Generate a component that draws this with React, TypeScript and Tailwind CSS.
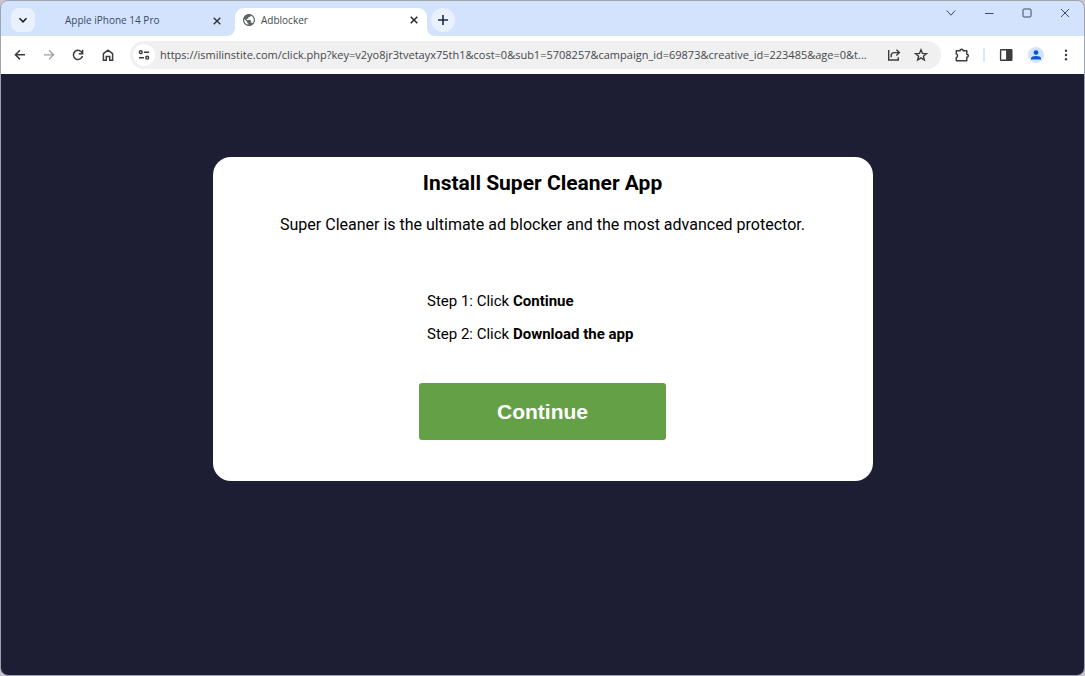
import type { ReactNode } from "react";

function IconButton({ label, className, children }: { label: string; className: string; children: ReactNode }) {
  return (
    <button type="button" aria-label={label} className={`flex shrink-0 items-center justify-center ${className}`}>
      {children}
    </button>
  );
}

function Icon({ size = 16, stroke = 2, children }: { size?: number; stroke?: number; children: ReactNode }) {
  return (
    <svg width={size} height={size} viewBox={`0 0 ${size} ${size}`} fill="none" stroke="currentColor" strokeWidth={stroke} aria-hidden="true">
      {children}
    </svg>
  );
}

function CloseIcon() {
  return (
    <Icon size={10} stroke={1.4}>
      <path d="M1.7 1.7 8.3 8.3M8.3 1.7 1.7 8.3" />
    </Icon>
  );
}

function GlobeIcon() {
  return (
    <svg width="12" height="12" viewBox="2 2 20 20" fill="#5f6368" aria-hidden="true">
      <path d="M12 2C6.48 2 2 6.48 2 12s4.48 10 10 10 10-4.48 10-10S17.52 2 12 2zm-1 17.93c-3.95-.49-7-3.85-7-7.93 0-.62.08-1.21.21-1.79L9 15v1c0 1.1.9 2 2 2v1.93zm6.9-2.54c-.26-.81-1-1.39-1.9-1.39h-1v-3c0-.55-.45-1-1-1H8v-2h2c.55 0 1-.45 1-1V7h2c1.1 0 2-.9 2-2v-.41c2.93 1.19 5 4.06 5 7.41 0 2.08-.8 3.97-2.1 5.39z" />
    </svg>
  );
}

function TabStrip() {
  return (
    <div className="flex h-[35px] shrink-0 bg-[#d3e3fd] pl-2 text-[#3c4a60]">
      <IconButton label="Search tabs" className="mt-[7px] ml-0.5 size-6 rounded-lg bg-[#e9f1fe] text-[#1f1f1f]">
        <Icon size={10} stroke={1.6}>
          <path d="M1.5 3.3 5 6.8 8.500 3.3" />
        </Icon>
      </IconButton>
      <div className="flex w-[200px] shrink-0 items-center pt-1 pr-[10px] pl-[30px]">
        <span className="grow text-[10px]">Apple iPhone 14 Pro</span>
        <IconButton label="Close Apple iPhone 14 Pro" className="size-4 text-[#333]">
          <CloseIcon />
        </IconButton>
      </div>
      <div className="relative mt-[7px] flex w-[192px] shrink-0 items-center rounded-t-[9px] bg-white pr-[5px] pb-[4px] pl-2">
        <svg className="absolute bottom-0 -left-2" width="8" height="8" viewBox="0 0 8 8" fill="white" aria-hidden="true">
          <path d="M8 0v8H0a8 8 0 0 0 8-8z" />
        </svg>
        <svg className="absolute -right-2 bottom-0" width="8" height="8" viewBox="0 0 8 8" fill="white" aria-hidden="true">
          <path d="M0 0v8h8a8 8 0 0 1-8-8z" />
        </svg>
        <GlobeIcon />
        <span className="ml-1.5 grow text-[10px] text-[#45484d]">Adblocker</span>
        <IconButton label="Close Adblocker" className="size-4 text-[#1f1f1f]">
          <CloseIcon />
        </IconButton>
      </div>
      <IconButton label="New tab" className="mt-[7px] ml-1 size-6 rounded-full bg-[#e9f1fe] text-[#1b2a41]">
        <Icon size={10} stroke={1.6}>
          <path d="M5 0v10M0 5h10" />
        </Icon>
      </IconButton>
      <div className="ml-auto flex h-6 text-[#3f4a5c]">
        <IconButton label="Tab menu" className="w-[38px]">
          <Icon size={10} stroke={1}>
            <path d="M.8 2.5 5 7.2 9.2 2.5" />
          </Icon>
        </IconButton>
        <IconButton label="Minimize" className="w-[38px]">
          <Icon size={10} stroke={1}>
            <path d="M1 5.5h8.5" />
          </Icon>
        </IconButton>
        <IconButton label="Maximize" className="w-[38px]">
          <Icon size={10} stroke={1}>
            <rect x="1" y="1" width="8" height="8" rx="1" />
          </Icon>
        </IconButton>
        <IconButton label="Close window" className="w-[38px]">
          <Icon size={10} stroke={1}>
            <path d="M1 1l8 8M9 1 1 9" />
          </Icon>
        </IconButton>
      </div>
    </div>
  );
}

const ADDRESS =
  "https://ismilinstite.com/click.php?key=v2yo8jr3tvetayx75th1&cost=0&sub1=5708257&campaign_id=69873&creative_id=223485&age=0&t...";

function Toolbar() {
  return (
    <div className="flex h-[38px] shrink-0 items-center bg-white px-1 text-[#3c3c3c]">
      <IconButton label="Back" className="h-7 w-[29px]">
        <Icon size={12} stroke={1.5}>
          <path d="M6 1.2 1.4 5.8 6 10.4M1.4 5.8H11" />
        </Icon>
      </IconButton>
      <IconButton label="Forward" className="h-7 w-[29px] text-[#a0a0a0]">
        <Icon size={12} stroke={1.3}>
          <path d="M6 1.2 10.6 5.8 6 10.4M10.6 5.800H1" />
        </Icon>
      </IconButton>
      <IconButton label="Reload" className="h-7 w-[30px]">
        <Icon size={12} stroke={1.5}>
          <path d="M10.3 4.2A4.6 4.6 0 1 0 10.5 7" />
          <path d="M10.6.8v3.9H6.8" />
        </Icon>
      </IconButton>
      <IconButton label="Home" className="h-7 w-[30px]">
        <Icon size={12} stroke={1.5}>
          <path d="M1.4 4.6 6 1.1l4.6 3.5v6.6H7.7V7.5H4.3v3.7H1.4z" />
        </Icon>
      </IconButton>
      <div className="ml-[7px] flex h-7 min-w-0 grow items-center rounded-full bg-[#f0f0f1] pr-[7px] pl-[3px]">
        <IconButton label="View site information" className="size-[22px] rounded-full bg-white">
          <Icon size={12} stroke={1.4}>
            <circle cx="2.8" cy="3.2" r="1.4" />
            <path d="M6 3.2h5M1 8.700h5" />
            <circle cx="9.2" cy="8.7" r="1.4" />
          </Icon>
        </IconButton>
        <input
          type="text"
          aria-label="Address and search bar"
          defaultValue={ADDRESS}
          className="ml-[5px] min-w-0 grow bg-transparent text-[11px] text-[#45484c] outline-none"
        />
        <IconButton label="Share this page" className="size-[27px]">
          <Icon size={14} stroke={1.4}>
            <path d="M1.7 2v10h9.600V9.300M4.200 9.300V7.600a3 3 0 0 1 3-3h4.800M9.400 1.700l3 2.900-3 2.900" />
          </Icon>
        </IconButton>
        <IconButton label="Bookmark this tab" className="size-[27px]">
          <Icon size={14} stroke={1.4}>
            <path d="M7 1.8 8.500 5.400l3.900.3-3 2.500.95 3.800L7 9.900 3.650 12l.95-3.800-3-2.500 3.900-.3z" />
          </Icon>
        </IconButton>
      </div>
      <IconButton label="Extensions" className="ml-[7px] size-7">
        <Icon size={14} stroke={1.5}>
          <path d="M1.300 2.700h3.800a1.500 1.500 0 0 1 3 0h3.700v3.500a1.500 1.500 0 0 1 0 3v3.500H1.300V9.500a1.900 1.900 0 0 0 0-3.600z" strokeLinejoin="round" />
        </Icon>
      </IconButton>
      <div className="mx-[7px] h-3.5 w-0.5 bg-[#d9e7fd]" />
      <IconButton label="Side panel" className="size-7">
        <Icon size={14} stroke={1.4}>
          <rect x="1.600" y="1.800" width="11" height="10.400" rx=".5" />
          <path d="M7.800 2h4.800v10H7.800z" fill="currentColor" />
        </Icon>
      </IconButton>
      <IconButton label="Profile" className="mx-0.5 size-7">
        <span className="flex size-4 items-center justify-center rounded-full bg-[#d3e3fd]">
          <svg width="10" height="10" viewBox="0 0 10 10" fill="#0b57d0" aria-hidden="true">
            <circle cx="5" cy="2.600" r="2.400" />
            <path d="M0 9.500V8.300C0 6.700 3 6 5 6s5 .7 5 2.300v1.200z" />
          </svg>
        </span>
      </IconButton>
      <IconButton label="Menu" className="size-7">
        <svg width="4" height="12" viewBox="0 0 4 12" fill="currentColor" aria-hidden="true">
          <circle cx="2" cy="1.800" r="1.200" />
          <circle cx="2" cy="6" r="1.200" />
          <circle cx="2" cy="10.200" r="1.200" />
        </svg>
      </IconButton>
    </div>
  );
}

export default function App() {
  return (
    <div className="flex min-h-screen bg-[#c5c5cb] font-['Open_Sans',sans-serif]">
      <div className="flex min-w-0 grow flex-col overflow-hidden rounded-lg border border-[#9ea3ae]">
        <TabStrip />
        <Toolbar />
        <main className="grow bg-[#1d1e33] px-4 pt-[83px] pb-8 font-[Roboto,sans-serif] text-black">
          <section className="mx-auto flex max-w-[660px] flex-col items-center rounded-[18px] bg-white pt-3 pb-[41px]">
            <h1 className="text-[21px] leading-7 font-bold">Install Super Cleaner App</h1>
            <p className="mt-4 text-[16px] leading-6">Super Cleaner is the ultimate ad blocker and the most advanced protector.</p>
            <div className="mt-12 flex w-[247px] flex-col">
              <ol className="px-2 text-[15px] leading-[33px]">
                <li>
                  Step 1: Click <b>Continue</b>
                </li>
                <li>
                  Step 2: Click <b>Download the app</b>
                </li>
              </ol>
              <button type="button" className="mt-8 h-[57px] rounded-[3px] bg-[#64a146] font-['Liberation_Sans',sans-serif] text-[21px] font-bold text-white">
                Continue
              </button>
            </div>
          </section>
        </main>
      </div>
    </div>
  );
}
